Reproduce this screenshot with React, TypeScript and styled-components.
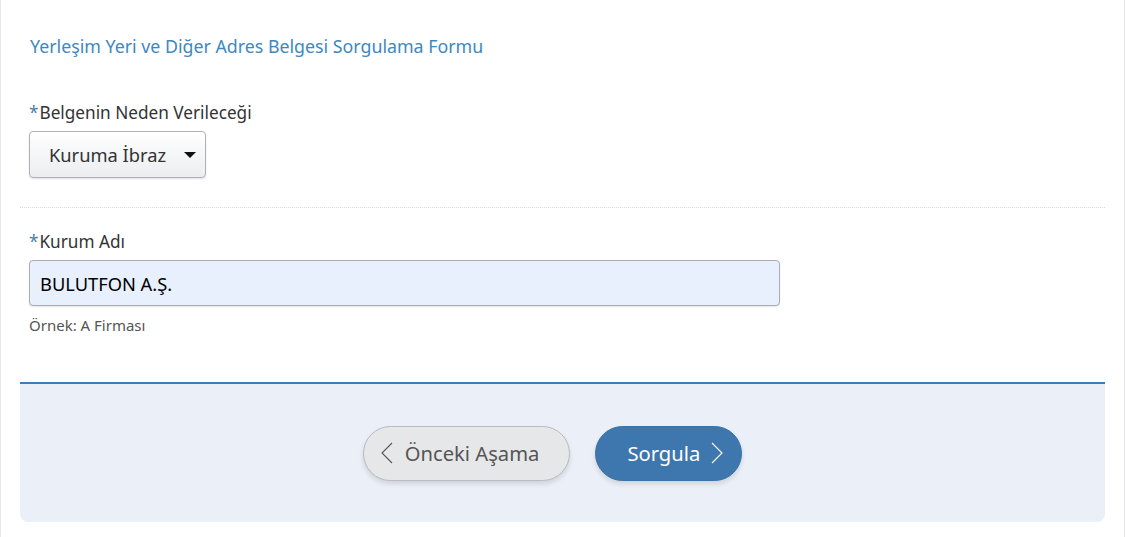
import React from "react";
import styled, { createGlobalStyle } from "styled-components";

const GlobalStyle = createGlobalStyle`
  html, body {
    margin: 0;
    padding: 0;
    background: #ffffff;
  }
  body {
    font-family: "Noto Sans", "Open Sans", sans-serif;
    color: #333333;
  }
`;

const Card = styled.div`
  box-sizing: border-box;
  width: 1125px;
  min-height: 545px;
  border: 1px solid #e4e7eb;
  border-top: none;
  border-radius: 0 0 6px 6px;
  background: #ffffff;
  padding: 0 19px 15px 19px;
`;

const Title = styled.h2`
  margin: 0;
  padding: 34px 10px 0 10px;
  font-size: 17.8px;
  font-weight: 400;
  color: #3d88bf;
  line-height: 24px;
`;

const Field = styled.div<{ $divider?: boolean }>`
  padding: 0 9px 29px 9px;
  border-bottom: ${(p) => (p.$divider ? "1px dotted #d9dde2" : "none")};
`;

const Label = styled.label<{ $top: number }>`
  display: block;
  padding-top: ${(p) => p.$top}px;
  margin-bottom: 7px;
  font-size: 17.2px;
  line-height: 22px;
  color: #333333;
`;

const Star = styled.span`
  color: #4d7fa6;
  margin-right: 1px;
`;

const SelectBox = styled.div`
  box-sizing: border-box;
  display: inline-flex;
  align-items: center;
  justify-content: space-between;
  width: 177px;
  height: 47px;
  padding: 0 9px 0 19px;
  border: 1px solid #aeb1b5;
  border-radius: 4px;
  background: linear-gradient(#ffffff, #ebedef);
  box-shadow: 0 1px 2px rgba(0, 0, 0, 0.12);
  font-size: 18.3px;
  color: #333333;
`;

const Caret = styled.span`
  width: 0;
  height: 0;
  border-left: 6px solid transparent;
  border-right: 6px solid transparent;
  border-top: 6px solid #111111;
`;

const TextInput = styled.div`
  box-sizing: border-box;
  width: 751px;
  height: 46px;
  display: flex;
  align-items: center;
  padding: 0 10px;
  border: 1px solid #a9acb0;
  border-radius: 4px;
  background: #e8f0fe;
  box-shadow: 0 1px 2px rgba(0, 0, 0, 0.1);
  font-size: 18.3px;
  font-weight: 400;
  color: #000000;
`;

const Hint = styled.div`
  margin-top: 9px;
  font-size: 15px;
  color: #555555;
`;

const Footer = styled.div`
  margin-top: 18px;
  box-sizing: border-box;
  height: 140px;
  border-top: 2px solid #3d7db8;
  border-radius: 0 0 8px 8px;
  background: #ebf0f8;
  display: flex;
  align-items: center;
  justify-content: center;
  gap: 25px;
  padding-right: 20px;
`;

const PillButton = styled.button<{ $primary?: boolean }>`
  box-sizing: border-box;
  height: 55px;
  display: inline-flex;
  align-items: center;
  gap: ${(p) => (p.$primary ? "11px" : "12px")};
  padding: ${(p) => (p.$primary ? "0 18px 0 31px" : "0 30px 0 17px")};
  border-radius: 28px;
  border: 1px solid ${(p) => (p.$primary ? "#3a72a6" : "#b9bbbe")};
  background: ${(p) => (p.$primary ? "#3d77ad" : "#e6e7e9")};
  color: ${(p) => (p.$primary ? "#ffffff" : "#555555")};
  box-shadow: 0 3px 5px rgba(0, 0, 0, 0.12);
  font-family: "Noto Sans", sans-serif;
  font-size: 20.2px;
  cursor: pointer;
`;

const Chevron = ({ dir }: { dir: "left" | "right" }) => (
  <svg width="12" height="22" viewBox="0 0 12 22" fill="none">
    <path
      d={dir === "left" ? "M11 1 L1 11 L11 21" : "M1 1 L11 11 L1 21"}
      stroke="currentColor"
      strokeWidth="1.1"
    />
  </svg>
);

const App = () => {
  return (
    <>
      <GlobalStyle />
      <Card>
        <Title>Yerleşim Yeri ve Diğer Adres Belgesi Sorgulama Formu</Title>
        <Field $divider>
          <Label $top={44}>
            <Star>*</Star>Belgenin Neden Verileceği
          </Label>
          <SelectBox>
            Kuruma İbraz
            <Caret />
          </SelectBox>
        </Field>
        <Field>
          <Label $top={23}>
            <Star>*</Star>Kurum Adı
          </Label>
          <TextInput>BULUTFON A.Ş.</TextInput>
          <Hint>Örnek: A Firması</Hint>
        </Field>
        <Footer>
          <PillButton>
            <Chevron dir="left" />
            Önceki Aşama
          </PillButton>
          <PillButton $primary>
            Sorgula
            <Chevron dir="right" />
          </PillButton>
        </Footer>
      </Card>
    </>
  );
};

export default App;
